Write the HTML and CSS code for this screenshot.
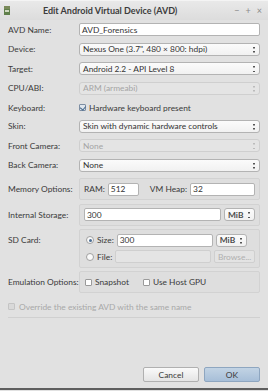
FILE: index.html
```html
<!DOCTYPE html>
<html lang="en">
<head>
  <meta charset="UTF-8" />
  <title>Edit Android Virtual Device (AVD)</title>
  <link rel="stylesheet" href="styles.css">
</head>
<body>
  <div class="window">
    <div class="titlebar">
      <svg class="app-icon" width="6" height="9" viewBox="0 0 6 9">
        <rect x="0" y="0" width="6" height="3" fill="#7a8a5a"/>
        <rect x="0" y="3" width="6" height="6" fill="#5f7f4a"/>
        <rect x="1" y="4" width="4" height="2" fill="#cfd8c0"/>
      </svg>
      <span class="title">Edit Android Virtual Device (AVD)</span>
      <span class="controls">
        <span>&minus;</span><span>+</span><span>&times;</span>
      </span>
    </div>

    <div class="content">
      <div class="row">
        <label>AVD Name:</label>
        <div class="input">AVD_Forensics</div>
      </div>
      <div class="row">
        <label>Device:</label>
        <div class="combo">Nexus One (3.7", 480 × 800: hdpi)<span class="arrows"></span></div>
      </div>
      <div class="row">
        <label>Target:</label>
        <div class="combo">Android 2.2 - API Level 8<span class="arrows"></span></div>
      </div>
      <div class="row">
        <label>CPU/ABI:</label>
        <div class="combo disabled">ARM (armeabi)<span class="arrows"></span></div>
      </div>
      <div class="row short">
        <label>Keyboard:</label>
        <div class="check-item"><span class="checkbox checked"></span>Hardware keyboard present</div>
      </div>
      <div class="row">
        <label>Skin:</label>
        <div class="combo">Skin with dynamic hardware controls<span class="arrows"></span></div>
      </div>
      <div class="row">
        <label>Front Camera:</label>
        <div class="combo disabled">None<span class="arrows"></span></div>
      </div>
      <div class="row">
        <label>Back Camera:</label>
        <div class="combo">None<span class="arrows"></span></div>
      </div>

      <div class="grouprow mem">
        <label>Memory Options:</label>
        <div class="group">
          <span class="sub">RAM:</span>
          <div class="input ram">512</div>
          <span class="sub heap">VM Heap:</span>
          <div class="input vm">32</div>
        </div>
      </div>

      <div class="grouprow storage">
        <label>Internal Storage:</label>
        <div class="group">
          <div class="input grow">300</div>
          <div class="combo unit">MiB<span class="arrows"></span></div>
        </div>
      </div>

      <div class="grouprow sd">
        <label>SD Card:</label>
        <div class="group column">
          <div class="line">
            <span class="radio on"></span><span class="sub">Size:</span>
            <div class="input size">300</div>
            <div class="combo unit">MiB<span class="arrows"></span></div>
          </div>
          <div class="line">
            <span class="radio"></span><span class="sub">File:</span>
            <div class="input size disabled"></div>
            <div class="button small disabled">Browse...</div>
          </div>
        </div>
      </div>

      <div class="grouprow emu">
        <label>Emulation Options:</label>
        <div class="group">
          <div class="check-item"><span class="checkbox"></span>Snapshot</div>
          <div class="check-item gpu"><span class="checkbox"></span>Use Host GPU</div>
        </div>
      </div>

      <div class="override">
        <span class="checkbox disabled"></span>Override the existing AVD with the same name
      </div>
      <div class="separator"></div>
    </div>

    <div class="footer">
      <div class="button">Cancel</div>
      <div class="button default">OK</div>
    </div>
  </div>
</body>
</html>
```

FILE: styles.css
```css
* {
  box-sizing: border-box;
  margin: 0;
  padding: 0;
}

body {
  background: #e1e1e1;
  font-family: Lato, 'Noto Sans', sans-serif;
  font-size: 8.4px;
  color: #3a3a3a;
  width: 268px;
  height: 391px;
  overflow: hidden;
}

.window {
  height: 390px;
  display: flex;
  flex-direction: column;
  border-bottom: 2px solid #5e5e5e;
}

.titlebar {
  height: 20px;
  display: flex;
  align-items: center;
  padding: 0 6px 0 4px;
  background: linear-gradient(#e9e9e9, #dcdcdc);
  border-top: 1px solid #f4f4f4;
}

.app-icon {
  flex: none;
}

.title {
  flex: 1;
  text-align: center;
  font-weight: bold;
  font-size: 9px;
  color: #3c3c3c;
  padding-right: 24px;
}

.controls {
  display: flex;
  gap: 6px;
  color: #8a8a8a;
  font-size: 9px;
}

.content {
  flex: 1;
  padding: 3px 8px 0 8px;
  display: flex;
  flex-direction: column;
}

.row {
  display: flex;
  align-items: center;
  height: 13px;
  margin-bottom: 6.5px;
}

.row.short {
  height: 11px;
  margin-top: 1px;
}

label {
  width: 71px;
  flex: none;
  white-space: nowrap;
}

.input, .combo {
  height: 13px;
  display: flex;
  align-items: center;
  padding: 0 2px;
  background: #fff;
  border: 1px solid #b3b3b3;
  border-radius: 2px;
  color: #333;
  white-space: nowrap;
}

.row .input, .row .combo {
  flex: 1;
}

.combo {
  position: relative;
  padding-left: 3px;
  border-radius: 3px;
  background: linear-gradient(#fbfbfb, #f1f1f1);
}

.combo.disabled, .input.disabled {
  background: #e4e4e4;
  border-color: #cfcfcf;
  color: #a5a5a5;
}

.arrows {
  position: absolute;
  right: 4px;
  top: 3px;
  width: 2px;
  height: 6px;
  background:
    linear-gradient(#555, #555) top / 2px 1.5px no-repeat,
    linear-gradient(#555, #555) bottom / 2px 1.5px no-repeat;
}

.combo.disabled .arrows {
  background:
    linear-gradient(#bbb, #bbb) top / 2px 1.5px no-repeat,
    linear-gradient(#bbb, #bbb) bottom / 2px 1.5px no-repeat;
}

.check-item {
  display: flex;
  align-items: center;
  gap: 3px;
  white-space: nowrap;
}

.checkbox {
  width: 7px;
  height: 7px;
  border: 1px solid #9a9a9a;
  border-radius: 1px;
  background: #fff;
  display: inline-block;
  position: relative;
  flex: none;
}

.checkbox.checked {
  background: #dfe6ee;
  border-color: #7d8ea3;
}

.checkbox.checked::after {
  content: "";
  position: absolute;
  left: 1px;
  top: 0;
  width: 3px;
  height: 4px;
  border-right: 1.3px solid #4a6b8e;
  border-bottom: 1.3px solid #4a6b8e;
  transform: rotate(40deg);
}

.checkbox.disabled {
  background: #d9d9d9;
  border-color: #c4c4c4;
}

.grouprow {
  display: flex;
  margin-bottom: 3.5px;
}

.grouprow label {
  padding-top: 6px;
}

.mem label, .storage label, .emu label {
  align-self: center;
  padding-top: 0;
}

.group {
  flex: 1;
  display: flex;
  align-items: center;
  gap: 3px;
  padding: 3.5px 4px;
  border: 1px solid #d2d2d2;
  border-radius: 2px;
  background: #dedede;
}

.group.column {
  flex-direction: column;
  align-items: stretch;
  gap: 3.5px;
}

.line {
  display: flex;
  align-items: center;
  gap: 3px;
}

.sub {
  white-space: nowrap;
}

.input.ram {
  width: 31px;
}

.heap {
  margin-left: 8px;
}

.input.vm {
  flex: 1;
}

.input.grow {
  flex: 1;
}

.combo.unit {
  width: 31px;
  flex: none;
  font-weight: bold;
  color: #4a4a4a;
}

.emu .group {
  gap: 14px;
  padding: 5px 5px;
}

.input.size {
  width: 96px;
}

.radio {
  width: 8px;
  height: 8px;
  border-radius: 50%;
  border: 1px solid #a0a0a0;
  background: #fafafa;
  display: inline-block;
  position: relative;
  margin-left: 2px;
  flex: none;
}

.radio.on::after {
  content: "";
  position: absolute;
  left: 1.5px;
  top: 1.5px;
  width: 3px;
  height: 3px;
  border-radius: 50%;
  background: #4b6e94;
}

.button {
  height: 15px;
  display: flex;
  align-items: center;
  justify-content: center;
  border: 1px solid #b0b0b0;
  border-radius: 2px;
  background: linear-gradient(#fafafa, #e4e4e4);
  color: #3a3a3a;
}

.button.small {
  flex: 1;
  height: 13px;
}

.button.disabled {
  color: #b0b0b0;
  background: #e3e3e3;
  border-color: #cfcfcf;
}

.override {
  display: flex;
  align-items: center;
  gap: 4px;
  color: #a8a8a8;
  margin-top: 5px;
}

.separator {
  height: 1px;
  background: #d0d0d0;
  margin-top: 5px;
}

.footer {
  display: flex;
  justify-content: flex-end;
  gap: 5px;
  padding: 0 8px 6px 0;
}

.footer .button {
  width: 56px;
}

.button.default {
  background: linear-gradient(#c2d3e4, #a7bfd8);
  border-color: #8ea6c0;
}
```
